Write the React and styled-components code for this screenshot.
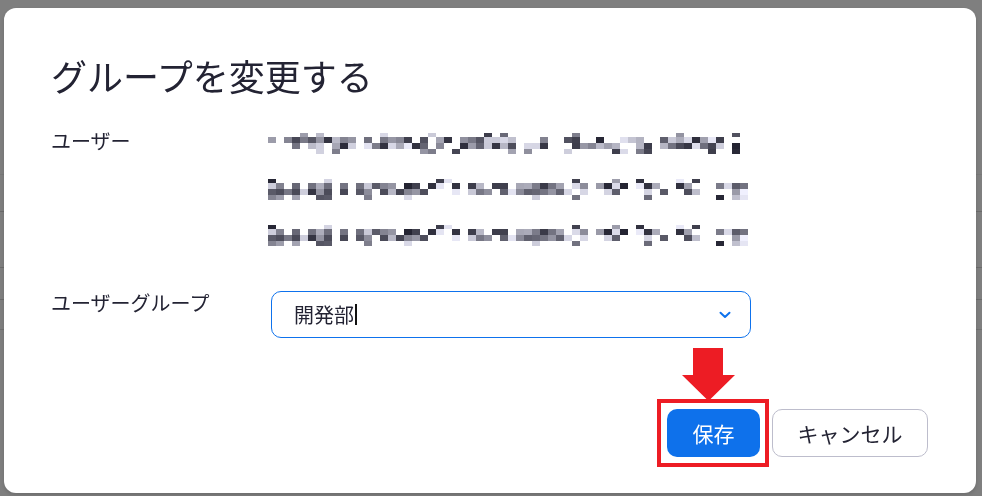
import React from 'react';
import styled, { createGlobalStyle } from 'styled-components';

const GlobalStyle = createGlobalStyle`
  html, body {
    margin: 0;
    padding: 0;
  }
  body {
    font-family: "Noto Sans CJK JP", "Noto Sans", sans-serif;
    background: #fff;
    overflow: hidden;
  }
`;

// deterministic noise for the pixelated e-mail addresses
const rng = (seed) => {
  let a = seed;
  return () => {
    a |= 0;
    a = (a + 0x6d2b79f5) | 0;
    let t = Math.imul(a ^ (a >>> 15), 1 | a);
    t = (t + Math.imul(t ^ (t >>> 7), 61 | t)) ^ t;
    return ((t ^ (t >>> 14)) >>> 0) / 4294967296;
  };
};

const bands = [
  { y: 0, h: 4, d: 0.2 },
  { y: 4, h: 6, d: 0.75 },
  { y: 10, h: 6, d: 0.75 },
  { y: 16, h: 5, d: 0.15 },
];

const Mosaic = ({ seed, width }) => {
  const rand = rng(seed);
  const cols = Math.floor(width / 8);
  const cells = [];
  for (let c = 0; c < cols; c++) {
    const gap = rand() < 0.12;
    bands.forEach((b, r) => {
      if (!gap && rand() < b.d) {
        const v = Math.round(35 + rand() * 205);
        cells.push(
          <rect key={`${c}-${r}`} x={c * 8} y={b.y} width="8" height={b.h} fill={`rgb(${v},${v},${Math.min(255, v + 14)})`} />
        );
      }
    });
  }
  return (
    <svg width={width} height="21" viewBox={`0 0 ${width} 21`} shapeRendering="crispEdges">
      {cells}
    </svg>
  );
};

const App = () => {
  return (
    <Page>
      <GlobalStyle />
      <Behind>
        <BehindRow $h={175} $line="#f0f0f0" />
        <BehindRow $h={37} $line="#d6d6d6" />
        <BehindRow $h={56} $line="#d6d6d6" />
        <BehindRow $h={32} $line="#d6d6d6" />
        <BehindRow $h={30} $line="#e2e2e2" />
      </Behind>

      <Overlay>
        <Dialog>
          <Title>グループを変更する</Title>

          <Form>
            <Label $lh={42}>ユーザー</Label>
            <Emails>
              <EmailLine><Mosaic seed={11} width={472} /></EmailLine>
              <EmailLine><Mosaic seed={27} width={480} /></EmailLine>
              <EmailLine><Mosaic seed={27} width={480} /></EmailLine>
            </Emails>

            <Label $lh={24}>ユーザーグループ</Label>
            <SelectBox>
              <SelectValue>
                開発部<Caret />
              </SelectValue>
              <svg width="12" height="8" viewBox="0 0 12 8">
                <path d="M1.5 1.8 L6 6 L10.5 1.8" fill="none" stroke="#0e72ed" strokeWidth="2" strokeLinecap="round" strokeLinejoin="round" />
              </svg>
            </SelectBox>
          </Form>

          <Footer>
            <Highlight>
              <Arrow width="53" height="53" viewBox="0 0 53 53">
                <polygon points="11,0 41,0 41,27 53,27 26.5,53 0,27 11,27" fill="#ed1c24" />
              </Arrow>
              <SaveButton>保存</SaveButton>
            </Highlight>
            <CancelButton>キャンセル</CancelButton>
          </Footer>
        </Dialog>
      </Overlay>
    </Page>
  );
};

export default App;

const Page = styled.div`
  position: relative;
  width: 982px;
  height: 496px;
  overflow: hidden;
`;

const Behind = styled.div`
  display: flex;
  flex-direction: column;
`;

const BehindRow = styled.div`
  height: ${(p) => p.$h}px;
  border-bottom: 1px solid ${(p) => p.$line};
  box-sizing: border-box;
`;

const Overlay = styled.div`
  position: fixed;
  inset: 0;
  background: rgba(0, 0, 0, 0.5);
  padding: 8px 6px 3px 4px;
  display: flex;
  box-sizing: border-box;
`;

const Dialog = styled.div`
  flex: 1;
  background: #fff;
  border-radius: 12px;
  padding: 43px 48px 26px 47px;
  display: flex;
  flex-direction: column;
  box-shadow: 0 2px 4px rgba(0, 0, 0, 0.15);
`;

const Title = styled.h1`
  margin: 0;
  font-size: 36px;
  line-height: 48px;
  font-weight: 400;
  color: #232333;
`;

const Form = styled.div`
  margin-top: 21px;
  display: grid;
  grid-template-columns: 220px 480px;
  row-gap: 33px;
  align-items: start;
`;

const Label = styled.div`
  font-size: 20px;
  line-height: ${(p) => p.$lh}px;
  color: #232333;
`;

const Emails = styled.div`
  display: flex;
  flex-direction: column;
  margin-left: -3px;
`;

const EmailLine = styled.div`
  height: 46px;
  display: flex;
  align-items: center;
`;

const SelectBox = styled.div`
  box-sizing: border-box;
  width: 480px;
  height: 47px;
  border: 1px solid #0e72ed;
  border-radius: 10px;
  padding: 0 19px 0 22px;
  display: flex;
  align-items: center;
  justify-content: space-between;
`;

const SelectValue = styled.span`
  display: flex;
  align-items: center;
  font-size: 20px;
  color: #232333;
`;

const Caret = styled.span`
  display: inline-block;
  width: 2px;
  height: 21px;
  margin-left: 1px;
  background: #111;
`;

const Footer = styled.div`
  margin-top: auto;
  display: flex;
  justify-content: flex-end;
  align-items: center;
  gap: 3px;
`;

const Highlight = styled.div`
  position: relative;
  border: 4px solid #ed1c24;
  padding: 6px 5px 6px 6px;
  display: flex;
`;

const Arrow = styled.svg`
  position: absolute;
  left: 21px;
  top: -55px;
`;

const BaseButton = styled.button`
  box-sizing: border-box;
  height: 48px;
  border-radius: 10px;
  font-family: "Noto Sans CJK JP", "Noto Sans", sans-serif;
  font-size: 21px;
  cursor: pointer;
`;

const SaveButton = styled(BaseButton)`
  width: 93px;
  border: none;
  background: #0e71eb;
  color: #fff;
`;

const CancelButton = styled(BaseButton)`
  width: 156px;
  border: 1px solid #bdbdcc;
  background: #fff;
  color: #232333;
`;
